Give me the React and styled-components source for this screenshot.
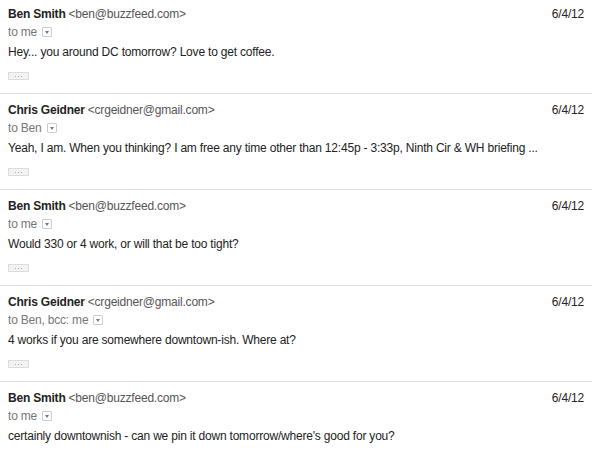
import React from "react";
import styled, { createGlobalStyle } from "styled-components";

const GlobalStyle = createGlobalStyle`
  body {
    margin: 0;
    background: #fff;
    font-family: "Liberation Sans", Arial, sans-serif;
  }
`;

const Viewport = styled.div`
  width: 592px;
  height: 451px;
  overflow: hidden;
`;

const Thread = styled.div`
  margin-top: -2px;
`;

const Message = styled.div`
  height: 96px;
  box-sizing: border-box;
  padding: 8px 8px 0 8px;
  border-bottom: 1px solid #dedede;
`;

const HeadRow = styled.div`
  display: flex;
  justify-content: space-between;
  align-items: baseline;
  font-size: 12px;
  line-height: 16px;
  letter-spacing: -0.2px;
  color: #222;
`;

const Sender = styled.span`
  font-weight: bold;
`;

const Email = styled.span`
  color: #555;
  margin-left: 3px;
`;

const Date = styled.span`
  color: #222;
`;

const ToRow = styled.div`
  display: flex;
  align-items: center;
  gap: 5px;
  margin-top: 2px;
  font-size: 12px;
  line-height: 16px;
  letter-spacing: -0.2px;
  color: #777;
`;

const Caret = styled.span`
  display: inline-block;
  width: 8px;
  height: 8px;
  border: 1px solid #ccc;
  border-radius: 1px;
  position: relative;
  &::after {
    content: "";
    position: absolute;
    left: 2px;
    top: 3px;
    border-left: 2px solid transparent;
    border-right: 2px solid transparent;
    border-top: 3px solid #777;
  }
`;

const Body = styled.div`
  margin-top: 4px;
  font-size: 12px;
  line-height: 16px;
  letter-spacing: -0.2px;
  color: #222;
  white-space: nowrap;
`;

const Dots = styled.div`
  margin-top: 12px;
  width: 19px;
  height: 6px;
  border: 1px solid #ddd;
  background: #f3f3f3;
  display: flex;
  justify-content: center;
  align-items: center;
  gap: 2px;
  span {
    width: 1px;
    height: 1px;
    background: #aaa;
  }
`;

const messages = [
  {
    name: "Ben Smith",
    email: "<ben@buzzfeed.com>",
    to: "to me",
    body: "Hey... you around DC tomorrow? Love to get coffee.",
  },
  {
    name: "Chris Geidner",
    email: "<crgeidner@gmail.com>",
    to: "to Ben",
    body: "Yeah, I am. When you thinking? I am free any time other than 12:45p - 3:33p, Ninth Cir & WH briefing ...",
  },
  {
    name: "Ben Smith",
    email: "<ben@buzzfeed.com>",
    to: "to me",
    body: "Would 330 or 4 work, or will that be too tight?",
  },
  {
    name: "Chris Geidner",
    email: "<crgeidner@gmail.com>",
    to: "to Ben, bcc: me",
    body: "4 works if you are somewhere downtown-ish. Where at?",
  },
  {
    name: "Ben Smith",
    email: "<ben@buzzfeed.com>",
    to: "to me",
    body: "certainly downtownish - can we pin it down tomorrow/where's good for you?",
  },
];

export default function App() {
  return (
    <Viewport>
      <GlobalStyle />
      <Thread>
        {messages.map((m, i) => (
          <Message key={i}>
            <HeadRow>
              <span>
                <Sender>{m.name}</Sender>
                <Email>{m.email}</Email>
              </span>
              <Date>6/4/12</Date>
            </HeadRow>
            <ToRow>
              {m.to}
              <Caret />
            </ToRow>
            <Body>{m.body}</Body>
            <Dots>
              <span />
              <span />
              <span />
            </Dots>
          </Message>
        ))}
      </Thread>
    </Viewport>
  );
}
